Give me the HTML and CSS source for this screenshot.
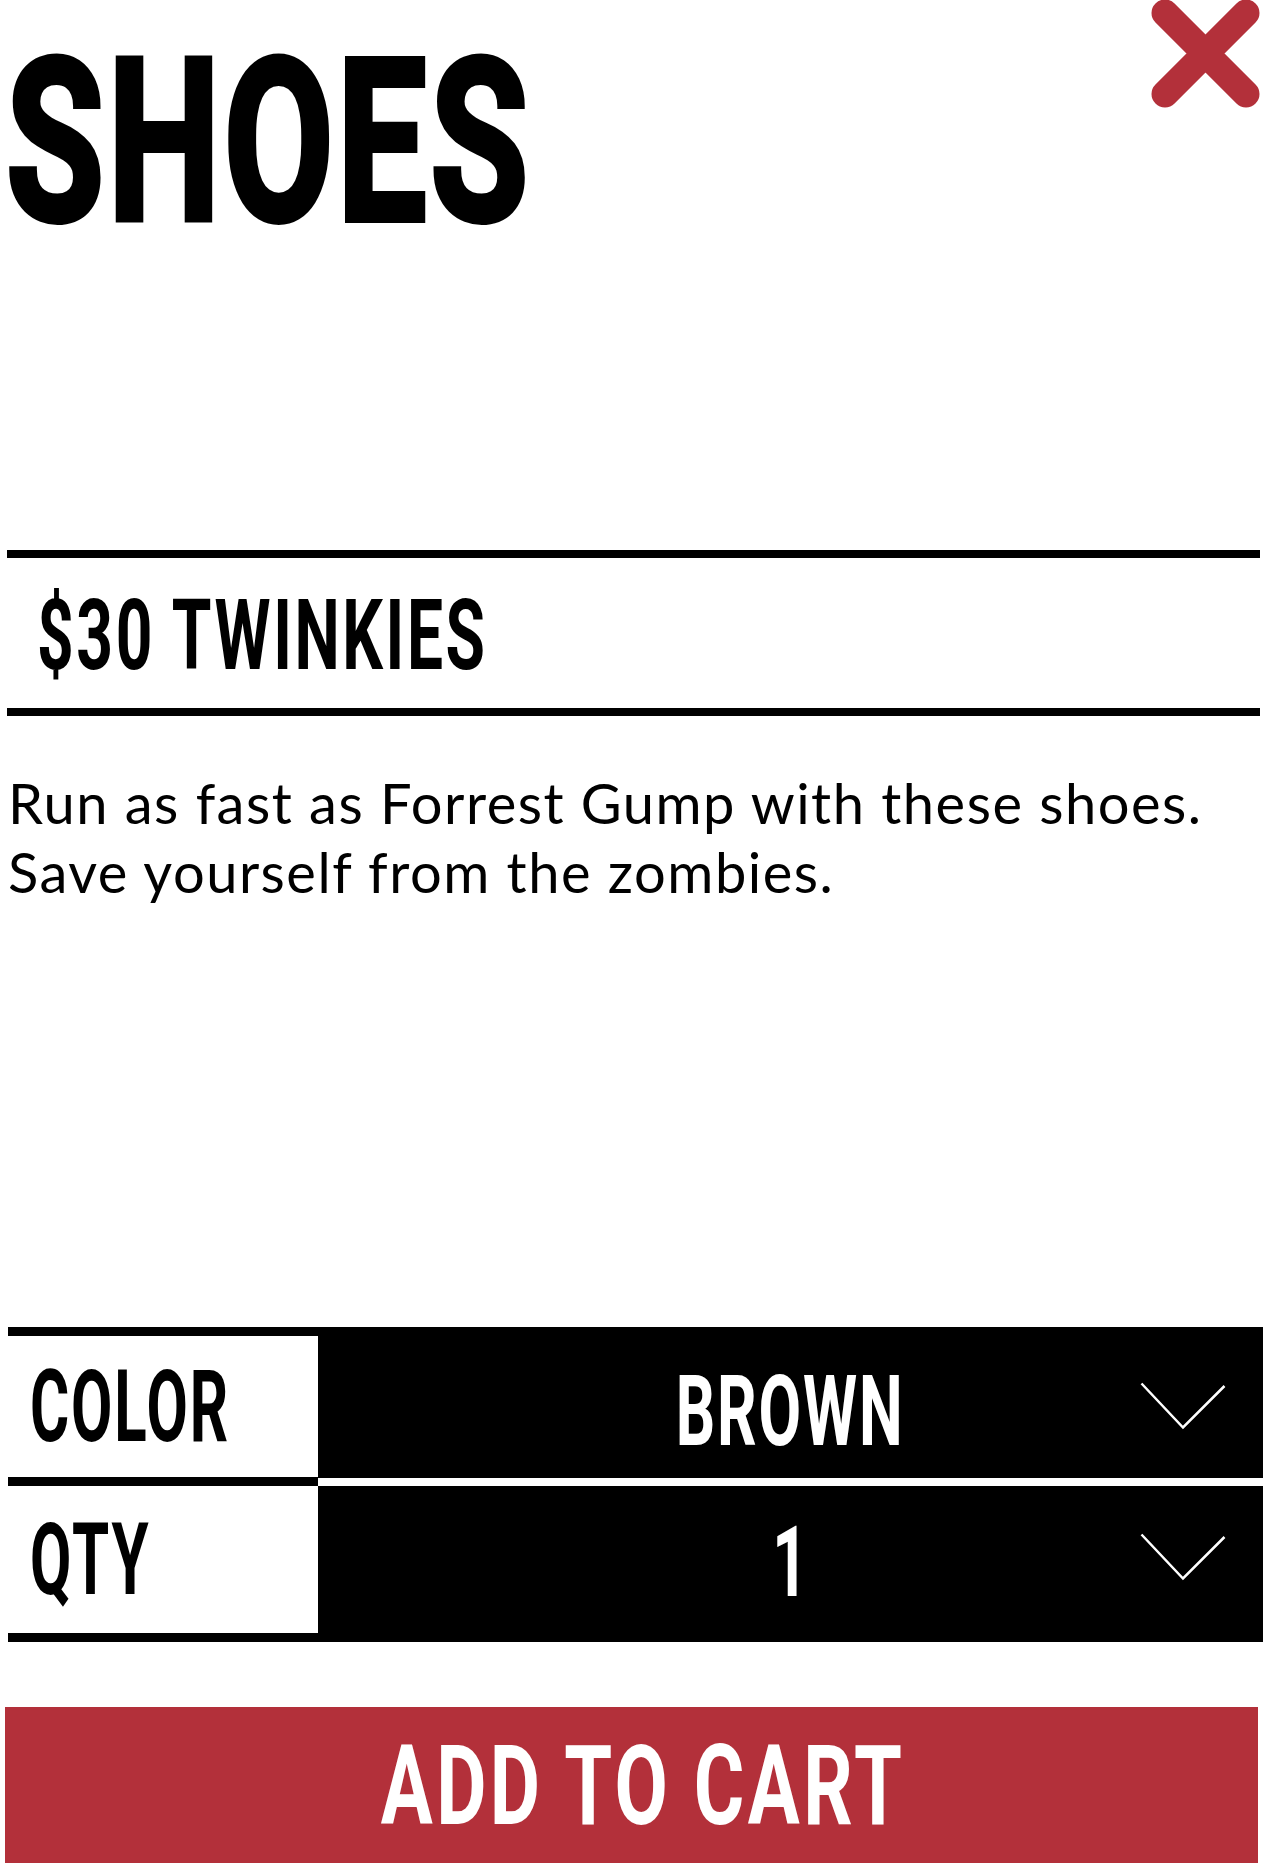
FILE: index.html
```html
<!DOCTYPE html>
<html lang="en">
<head>
<meta charset="utf-8">
<title>Shoes</title>
<link rel="stylesheet" href="styles.css">
</head>
<body>
<main class="modal">
  <header class="head">
    <h1 class="title"><span class="cond">SHOES</span></h1>
    <button class="close" aria-label="Close">
      <svg class="close-icon" viewBox="0 0 111 108" width="111" height="108">
        <path d="M15 13 L96 94 M96 13 L15 94" stroke="#b3303a" stroke-width="27" stroke-linecap="round" fill="none"/>
      </svg>
    </button>
  </header>

  <div class="price-bar"><span class="cond price">$30 TWINKIES</span></div>

  <p class="desc">Run as fast as Forrest Gump with these shoes.<br>Save yourself from the zombies.</p>

  <div class="options">
    <div class="opt-row row-color">
      <div class="opt-label"><span class="cond">COLOR</span></div>
      <div class="opt-value">
        <span class="cond cond-center">BROWN</span>
        <svg class="chev" viewBox="0 0 86 48" width="86" height="48"><polyline points="1.5,1.5 43,45.5 84.5,4" fill="none" stroke="#fff" stroke-width="2.5"/></svg>
      </div>
    </div>
    <div class="opt-row row-qty">
      <div class="opt-label"><span class="cond">QTY</span></div>
      <div class="opt-value">
        <span class="cond cond-center">1</span>
        <svg class="chev" viewBox="0 0 86 48" width="86" height="48"><polyline points="1.5,1.5 43,45.5 84.5,4" fill="none" stroke="#fff" stroke-width="2.5"/></svg>
      </div>
    </div>
  </div>

  <button class="add"><span class="cond cond-center">ADD TO CART</span></button>
</main>
</body>
</html>
```

FILE: styles.css
```css
html, body {
  margin: 0;
  padding: 0;
  background: #fff;
}

body {
  font-family: "Roboto", "Liberation Sans", sans-serif;
  color: #000;
}

.modal {
  display: flex;
  flex-direction: column;
}

.cond {
  display: inline-block;
  font-family: "Roboto", "Liberation Sans", sans-serif;
  font-weight: 700;
  transform: scaleX(0.68);
  transform-origin: left center;
  white-space: nowrap;
}

.cond-center {
  transform-origin: center center;
}

.head {
  height: 550px;
  display: flex;
  justify-content: space-between;
  align-items: flex-start;
}

.title {
  margin: 30px 0 0 6px;
  font-size: 226px;
  line-height: 226px;
  font-weight: 700;
}

.title .cond {
  letter-spacing: 5px;
  -webkit-text-stroke: 6px #000;
  transform: scaleX(0.705);
}

.close {
  margin: 0 2px 0 0;
  padding: 0;
  border: 0;
  background: none;
  width: 111px;
  height: 108px;
  cursor: pointer;
}

.close-icon {
  display: block;
}

.price-bar {
  margin: 0 3px 0 7px;
  border-top: 8px solid #000;
  border-bottom: 8px solid #000;
  height: 166px;
  box-sizing: border-box;
  padding: 6px 0 0 30px;
  line-height: 144px;
}

.price {
  font-size: 98.5px;
  letter-spacing: 4px;
  transform: scaleX(0.65);
}

.desc {
  margin: 52px 0 0 8px;
  font-family: "Lato", "Open Sans", sans-serif;
  font-size: 56px;
  line-height: 69px;
  font-weight: 400;
  letter-spacing: 1.5px;
}

.options {
  margin: 421px 0 0 8px;
  display: flex;
  flex-direction: column;
}

.opt-row {
  display: flex;
  align-items: flex-start;
}

.row-color {
  height: 159px;
}

.row-qty {
  height: 156px;
}

.opt-label {
  width: 310px;
  height: 100%;
  box-sizing: border-box;
  border-bottom: 9px solid #000;
  display: flex;
  align-items: center;
  padding-left: 22px;
  font-size: 100px;
}

.opt-label .cond {
  letter-spacing: 3px;
  transform: scaleX(0.6);
}

.row-color .opt-label {
  border-top: 9px solid #000;
}

.opt-value {
  flex: 1;
  position: relative;
  background: #000;
  color: #fff;
  display: flex;
  align-items: center;
  justify-content: center;
  font-size: 99px;
  box-sizing: border-box;
}

.opt-value .cond {
  letter-spacing: 3px;
  transform: scaleX(0.625);
}

.row-color .opt-value {
  height: 151px;
  padding-top: 16px;
}

.row-qty .opt-value {
  height: 156px;
  padding-bottom: 4px;
}

.chev {
  position: absolute;
  right: 37px;
}

.row-color .chev {
  top: 55px;
}

.row-qty .chev {
  top: 47px;
}

.add {
  margin: 65px 5px 0 5px;
  height: 156px;
  border: 0;
  padding: 0 0 0 24px;
  background: #b3303a;
  color: #fff;
  font-size: 112px;
  display: flex;
  align-items: center;
  justify-content: center;
  cursor: pointer;
}

.add .cond {
  letter-spacing: 5px;
  transform: scaleX(0.69);
}
```
